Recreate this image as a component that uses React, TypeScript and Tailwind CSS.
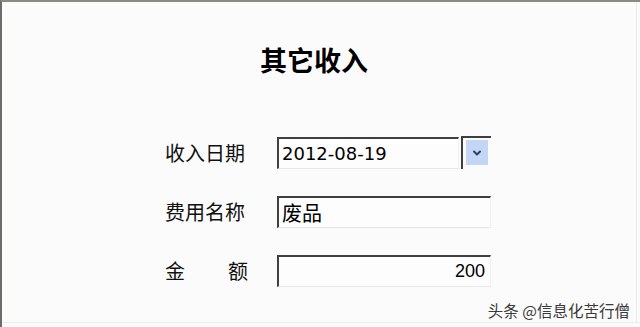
import { ChevronDown } from "lucide-react";

const cjk = "font-['Noto_Sans_CJK_SC',sans-serif]";

function Field({ children, className = "" }: { children?: React.ReactNode; className?: string }) {
  return (
    <div
      className={`h-[32px] flex items-center border-t-2 border-l-2 border-t-[#3f3f3f] border-l-[#3f3f3f] border-b border-r border-b-[#e6e6e6] border-r-[#f0f0f0] bg-[#fdfdfd] ${className}`}
    >
      {children}
    </div>
  );
}

export default function App() {
  return (
    <div className="relative w-[640px] h-[327px] overflow-hidden bg-[#fbfbfb] border-t-2 border-l-2 border-t-[#8c8a85] border-l-[#6e6c68]">
      <div className="absolute right-[3px] top-0 bottom-[4px] w-px bg-[#ececec]" />
      <div className="absolute left-0 right-0 bottom-[4px] h-px bg-[#ececec]" />

      <h1 className={`${cjk} pt-[40px] pl-[258px] text-[27px] leading-[36px] font-bold text-black`}>
        其它收入
      </h1>

      <div className={`${cjk} mt-[58px] ml-[163px] flex flex-col gap-[27px] text-[20px] text-[#111]`}>
        <div className="flex items-center">
          <span className="w-[112px] leading-[32px]">收入日期</span>
          <Field className="w-[182px] pl-[3px]">
            <span className="font-['DejaVu_Sans',sans-serif] text-[18px] text-black">2012-08-19</span>
          </Field>
          <div className="ml-[2px] w-[30px] h-[33px] border-t-2 border-l-2 border-t-[#3f3f3f] border-l-[#3f3f3f] pl-[3px] pt-[2px]">
            <div className="w-[22px] h-[25px] bg-[#c3d6f5] flex items-center justify-center">
              <ChevronDown className="w-[12px] h-[12px] text-[#2e3f6b]" strokeWidth={4} />
            </div>
          </div>
        </div>

        <div className="flex items-center">
          <span className="w-[112px] leading-[32px]">费用名称</span>
          <Field className="w-[214px] pl-[3px]">
            <span className="text-black">废品</span>
          </Field>
        </div>

        <div className="flex items-center">
          <span className="w-[112px] leading-[32px] flex">
            <span className="w-[63px]">金</span>
            <span>额</span>
          </span>
          <Field className="w-[214px] justify-end pr-[5px]">
            <span className="font-['Liberation_Sans',sans-serif] text-[18px] text-black">200</span>
          </Field>
        </div>
      </div>

      <div className={`${cjk} absolute right-[10px] bottom-[7px] text-[15.5px] leading-[20px] text-[#3a3a3a]`}>
        头条 @信息化苦行僧
      </div>
    </div>
  );
}
